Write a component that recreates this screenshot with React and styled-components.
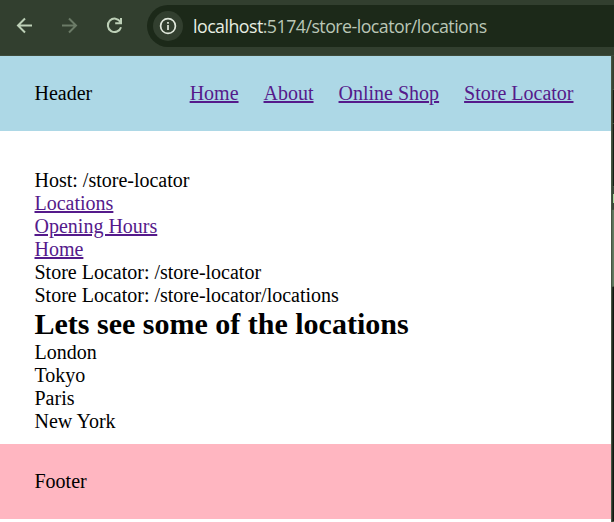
import React from 'react';
import styled, { createGlobalStyle } from 'styled-components';

const GlobalStyle = createGlobalStyle`
  * { box-sizing: border-box; }
  body { margin: 0; overflow: hidden; background: #fff; }
`;

const Window = styled.div`
  width: 614px;
  height: 522px;
  display: flex;
  flex-direction: column;
  overflow: hidden;
  font: 20px/23px 'Liberation Serif', 'Times New Roman', serif;
  color: #000;
`;

const Toolbar = styled.div`
  flex: none;
  height: 56px;
  display: flex;
  align-items: flex-start;
  background: #323f2f;
  border-bottom: 1px solid #3e4b3b;
`;

const Controls = styled.div`
  width: 147px;
  padding: 14px 0 0 13px;
  display: flex;
  gap: 21px;
`;

const IconButton = styled.button`
  width: 24px;
  height: 24px;
  padding: 0;
  border: 0;
  background: none;
  color: ${({ $dim }) => ($dim ? '#6b7b67' : '#bdd0b7')};
  svg { display: block; }
`;

const AddressBar = styled.div`
  flex: 1;
  height: 42px;
  margin-top: 5px;
  padding-left: 6px;
  display: flex;
  align-items: center;
  border-radius: 21px 0 0 21px;
  background: #1c2919;
`;

const SiteInfo = styled.span`
  width: 30px;
  height: 30px;
  display: grid;
  place-items: center;
  border-radius: 50%;
  background: #323f2f;
  color: #e0e8dc;
`;

const Url = styled.span`
  margin-left: 10px;
  font: 17.8px/24px 'Open Sans', 'Noto Sans', sans-serif;
  letter-spacing: -0.53px;
  white-space: nowrap;
  color: #bac6b6;
`;

const UrlHost = styled.span`
  color: #e7eee3;
`;

const Viewport = styled.div`
  flex: 1;
  display: flex;
  min-height: 0;
`;

const Page = styled.div`
  width: 611px;
  display: flex;
  flex-direction: column;
  background: #fff;
`;

const Band = styled.div`
  flex: none;
  height: 75px;
  padding: 0 37.5px 0 34.5px;
  display: flex;
  align-items: center;
  justify-content: space-between;
  background: ${({ $color }) => $color};
`;

const Nav = styled.nav`
  display: flex;
  gap: 25px;
`;

const Link = styled.a`
  color: #551a8b;
  text-decoration: underline 2px;
  text-underline-offset: 1px;
`;

const Main = styled.main`
  flex: none;
  height: 313px;
  padding: 38px 35px 0 34.5px;
  display: flex;
  flex-direction: column;
  align-items: flex-start;
`;

const Title = styled.h1`
  margin: 0;
  font-size: 30px;
  line-height: 34px;
  white-space: nowrap;
`;

const DevPanelEdge = styled.aside`
  width: 3px;
  display: grid;
  grid-template-rows: 34px 34px 63px 23px 77px 1fr;
  border-left: 1px solid #455441;
`;

const EdgeSegment = styled.span`
  background: ${({ $color }) => $color};
  border-left: 1px solid ${({ $line }) => $line || '#3a4837'};
  border-bottom: 1px solid #455441;
`;

const Marker = styled(EdgeSegment)`
  display: flex;
  align-items: flex-start;
  padding-top: 7px;
  &::after { content: ''; width: 1px; height: 9px; background: #a8d99c; }
`;

const pageLinks = ['Locations', 'Opening Hours', 'Home'];
const cities = ['London', 'Tokyo', 'Paris', 'New York'];

export default function App() {
  return (
    <Window>
      <GlobalStyle />
      <Toolbar>
        <Controls>
          <IconButton aria-label="Back">
            <svg width="24" height="24" fill="none" stroke="currentColor" strokeWidth="2">
              <path d="M19 11.5H5.5M12 4.5l-7 7 7 7" />
            </svg>
          </IconButton>
          <IconButton aria-label="Forward" $dim>
            <svg width="24" height="24" fill="none" stroke="currentColor" strokeWidth="2">
              <path d="M4 11.5h13.5M11 4.5l7 7-7 7" />
            </svg>
          </IconButton>
          <IconButton aria-label="Reload">
            <svg width="24" height="24" fill="none" stroke="currentColor" strokeWidth="2">
              <path d="M17.4 8A6.7 6.7 0 1 0 18 13.2M18 4V9.3h-5.8" />
            </svg>
          </IconButton>
        </Controls>
        <AddressBar>
          <SiteInfo>
            <svg width="18" height="18" fill="none" stroke="currentColor" strokeWidth="1.7">
              <circle cx="9" cy="9" r="7.4" />
              <path d="M9 8v5M9 5v1.8" />
            </svg>
          </SiteInfo>
          <Url><UrlHost>localhost</UrlHost>:5174/store-locator/locations</Url>
        </AddressBar>
      </Toolbar>
      <Viewport>
        <Page>
          <Band as="header" $color="#add8e6">
            <span>Header</span>
            <Nav>
              <Link href="#home">Home</Link>
              <Link href="#about">About</Link>
              <Link href="#shop">Online Shop</Link>
              <Link href="#stores">Store Locator</Link>
            </Nav>
          </Band>
          <Main>
            <div>Host: /store-locator</div>
            {pageLinks.map((name) => <Link href="#page" key={name}>{name}</Link>)}
            <div>Store Locator: /store-locator</div>
            <div>Store Locator: /store-locator/locations</div>
            <Title>Lets see some of the locations</Title>
            {cities.map((city) => <div key={city}>{city}</div>)}
          </Main>
          <Band as="footer" $color="#ffb6c1">Footer</Band>
        </Page>
        <DevPanelEdge>
          <EdgeSegment $color="#323f2f" />
          <EdgeSegment $color="#151d14" />
          <EdgeSegment $color="#151d14" />
          <Marker $color="#3a4837" />
          <EdgeSegment $color="#647c60" $line="#59705a" />
          <EdgeSegment $color="#111810" $line="#252f23" />
        </DevPanelEdge>
      </Viewport>
    </Window>
  );
}
